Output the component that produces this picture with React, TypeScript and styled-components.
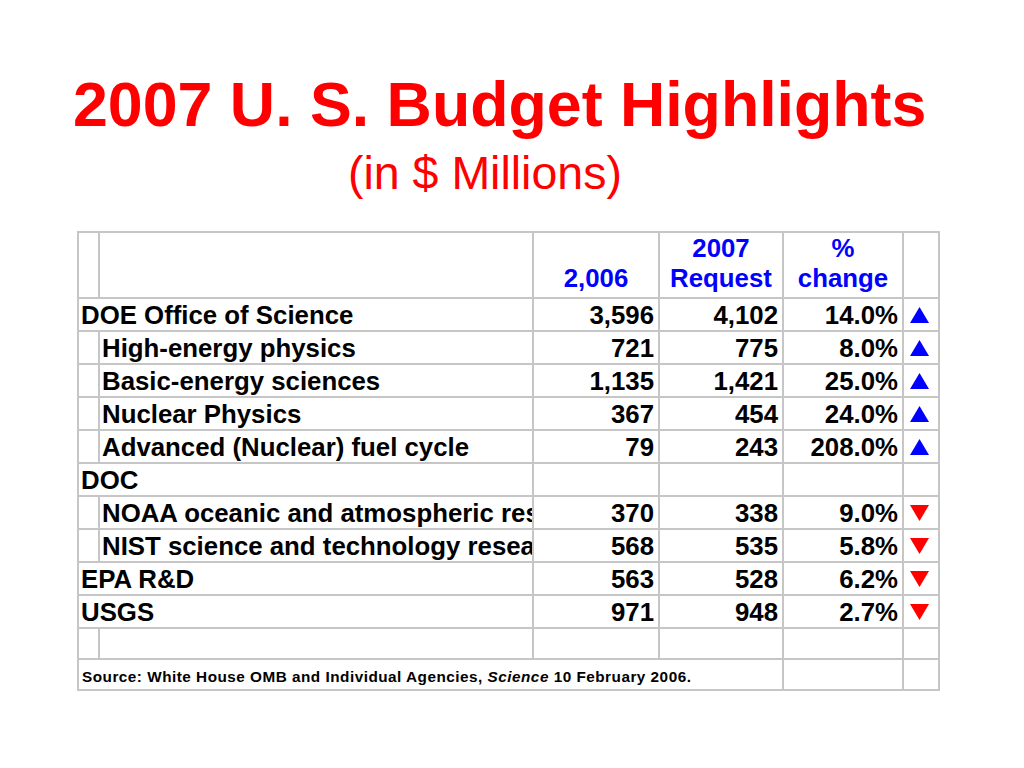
import React from "react";
import styled, { createGlobalStyle } from "styled-components";

const GlobalStyle = createGlobalStyle`
  html, body {
    margin: 0;
    padding: 0;
    background: #ffffff;
  }
  body {
    font-family: "Liberation Sans", Arial, sans-serif;
  }
`;

type Direction = "up" | "down";

type BudgetRow = {
  label: string;
  indent: boolean;
  v2006?: string;
  v2007?: string;
  pct?: string;
  dir?: Direction;
};

const rows: BudgetRow[] = [
  { label: "DOE Office of Science", indent: false, v2006: "3,596", v2007: "4,102", pct: "14.0%", dir: "up" },
  { label: "High-energy physics", indent: true, v2006: "721", v2007: "775", pct: "8.0%", dir: "up" },
  { label: "Basic-energy sciences", indent: true, v2006: "1,135", v2007: "1,421", pct: "25.0%", dir: "up" },
  { label: "Nuclear Physics", indent: true, v2006: "367", v2007: "454", pct: "24.0%", dir: "up" },
  { label: "Advanced (Nuclear) fuel cycle", indent: true, v2006: "79", v2007: "243", pct: "208.0%", dir: "up" },
  { label: "DOC", indent: false },
  { label: "NOAA oceanic and atmospheric research", indent: true, v2006: "370", v2007: "338", pct: "9.0%", dir: "down" },
  { label: "NIST science and technology research", indent: true, v2006: "568", v2007: "535", pct: "5.8%", dir: "down" },
  { label: "EPA R&D", indent: false, v2006: "563", v2007: "528", pct: "6.2%", dir: "down" },
  { label: "USGS", indent: false, v2006: "971", v2007: "948", pct: "2.7%", dir: "down" },
];

const Page = styled.div`
  width: 1024px;
  height: 768px;
  padding-top: 73px;
  box-sizing: border-box;
  overflow: hidden;
`;

const Title = styled.h1`
  margin: 0;
  padding-left: 73px;
  font-size: 62.7px;
  line-height: 62px;
  font-weight: bold;
  color: #ff0000;
  white-space: nowrap;
`;

const Subtitle = styled.div`
  margin-top: 15px;
  padding-left: 348px;
  font-size: 46.5px;
  line-height: 46px;
  color: #ff0000;
  white-space: nowrap;
`;

const Grid = styled.div`
  display: grid;
  width: max-content;
  margin: 35px 0 0 77px;
  padding: 2px;
  gap: 2px;
  background: #c6c6c6;
  grid-template-columns: 19px 432px 124px 122px 118px 34px;
  grid-template-rows: 64px repeat(10, 31px) 29px 29px;
`;

const Cell = styled.div<{ $span?: number; $align?: "left" | "right" | "center" }>`
  grid-column: span ${({ $span }) => $span ?? 1};
  background: #ffffff;
  display: flex;
  align-items: flex-end;
  justify-content: ${({ $align }) =>
    $align === "right" ? "flex-end" : $align === "center" ? "center" : "flex-start"};
  padding: 0 4px 1px 2px;
  font-size: 25.8px;
  line-height: 1;
  font-weight: bold;
  color: #000000;
  white-space: nowrap;
  overflow: hidden;
  min-width: 0;
`;

const HeadCell = styled(Cell)`
  color: #0000ff;
  line-height: 30px;
  text-align: center;
  padding: 0 2px 4px 2px;
`;

const ArrowCell = styled(Cell)`
  align-items: center;
  justify-content: center;
  padding: 0 3px 0 0;
`;

const SourceCell = styled(Cell)`
  align-items: center;
  padding: 3px 0 0 3px;
  font-size: 15.3px;
  line-height: 17px;
  letter-spacing: 0.5px;

  em {
    font-style: italic;
  }
`;

const Arrow = ({ dir }: { dir: Direction }) => (
  <svg width="19" height="16" viewBox="0 0 19 16">
    {dir === "up" ? (
      <polygon points="9.5,0 19,16 0,16" fill="#0000ff" />
    ) : (
      <polygon points="0,0 19,0 9.5,16" fill="#ff0000" />
    )}
  </svg>
);

const DataRow = ({ row }: { row: BudgetRow }) => (
  <>
    {row.indent ? (
      <>
        <Cell />
        <Cell>{row.label}</Cell>
      </>
    ) : (
      <Cell $span={2}>{row.label}</Cell>
    )}
    <Cell $align="right">{row.v2006}</Cell>
    <Cell $align="right">{row.v2007}</Cell>
    <Cell $align="right">{row.pct}</Cell>
    <ArrowCell>{row.dir && <Arrow dir={row.dir} />}</ArrowCell>
  </>
);

export default function App() {
  return (
    <Page>
      <GlobalStyle />
      <Title>2007 U. S. Budget Highlights</Title>
      <Subtitle>(in $ Millions)</Subtitle>
      <Grid>
        <HeadCell />
        <HeadCell />
        <HeadCell $align="center">2,006</HeadCell>
        <HeadCell $align="center">
          2007
          <br />
          Request
        </HeadCell>
        <HeadCell $align="center">
          %
          <br />
          change
        </HeadCell>
        <HeadCell />

        {rows.map((row) => (
          <DataRow key={row.label} row={row} />
        ))}

        <Cell />
        <Cell />
        <Cell />
        <Cell />
        <Cell />
        <Cell />

        <SourceCell $span={4}>
          <span>
            Source: White House OMB and Individual Agencies, <em>Science</em> 10 February 2006.
          </span>
        </SourceCell>
        <Cell />
        <Cell />
      </Grid>
    </Page>
  );
}
